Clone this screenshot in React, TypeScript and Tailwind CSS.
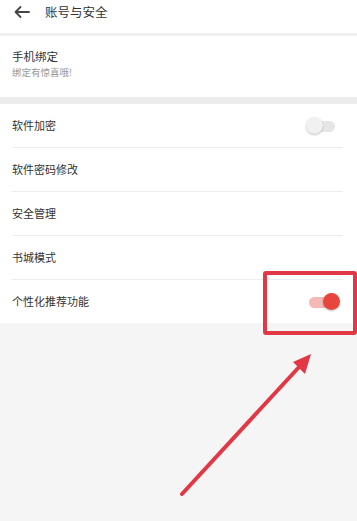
const font = { fontFamily: '"Noto Sans CJK SC", "Noto Sans", sans-serif' };

function Toggle({ on }: { on: boolean }) {
  return (
    <div className="relative h-[18px] w-[34px]">
      <div
        className={
          on
            ? "absolute left-[3px] top-[4px] h-[11px] w-[26px] rounded-full bg-[#f4b9b4]"
            : "absolute left-[3px] top-[4px] h-[11px] w-[26px] rounded-full bg-[#e6e6e6]"
        }
      />
      <div
        className={
          on
            ? "absolute right-0 top-0 h-[17px] w-[17px] rounded-full bg-[#e8463d] shadow-[0_1px_2px_rgba(0,0,0,0.25)]"
            : "absolute left-0 top-0 h-[17px] w-[17px] rounded-full bg-[#f1f1f1] shadow-[0_1px_2px_rgba(0,0,0,0.25)]"
        }
      />
    </div>
  );
}

const rows: { label: string; toggle?: boolean }[] = [
  { label: "软件加密", toggle: false },
  { label: "软件密码修改" },
  { label: "安全管理" },
  { label: "书城模式" },
  { label: "个性化推荐功能", toggle: true },
];

export default function App() {
  return (
    <div className="relative h-[521px] w-[357px] overflow-hidden bg-[#f5f5f5]" style={font}>
      {/* Header */}
      <div className="flex h-[33px] items-start bg-white pl-[14px] pt-[3px]">
        <svg width="16" height="18" viewBox="0 0 16 18" className="shrink-0">
          <path d="M1.5 9H15M6.5 4L1.5 9l5 5" fill="none" stroke="#444" strokeWidth="1.8" strokeLinecap="round" strokeLinejoin="round" />
        </svg>
        <span className="ml-[15px] text-[12.5px] leading-[18px] text-[#333]">账号与安全</span>
      </div>
      <div className="h-[3px] bg-[#f0f0f0]" />

      {/* Phone binding */}
      <div className="flex h-[61px] flex-col justify-center bg-white pb-[6px] pl-[12px]">
        <div className="text-[11.5px] leading-[16px] text-[#333]">手机绑定</div>
        <div className="text-[9.5px] leading-[16px] text-[#999]">绑定有惊喜哦!</div>
      </div>
      <div className="h-[7px] bg-[#ececec]" />

      {/* Settings list */}
      <div className="bg-white">
        {rows.map((r, i) => (
          <div key={r.label}>
            <div className="flex h-[43px] items-center justify-between pl-[12px] pr-[17px]">
              <span className="text-[11px] text-[#333]">{r.label}</span>
              {r.toggle !== undefined && <Toggle on={r.toggle} />}
            </div>
            {i < rows.length - 1 && <div className="ml-[12px] mr-[14px] h-px bg-[#ededed]" />}
          </div>
        ))}
      </div>

      {/* Annotation overlay */}
      <div className="absolute left-[263px] top-[271px] h-[64px] w-[94px] rounded-[3px] border-[4px] border-[#e23744]" />
      <svg className="absolute left-0 top-0" width="357" height="521" viewBox="0 0 357 521">
        <line x1="182" y1="494" x2="300" y2="366" stroke="#e23744" strokeWidth="4" strokeLinecap="round" />
        <polygon points="311,354 293,362 305,374" fill="#e23744" />
      </svg>
    </div>
  );
}
